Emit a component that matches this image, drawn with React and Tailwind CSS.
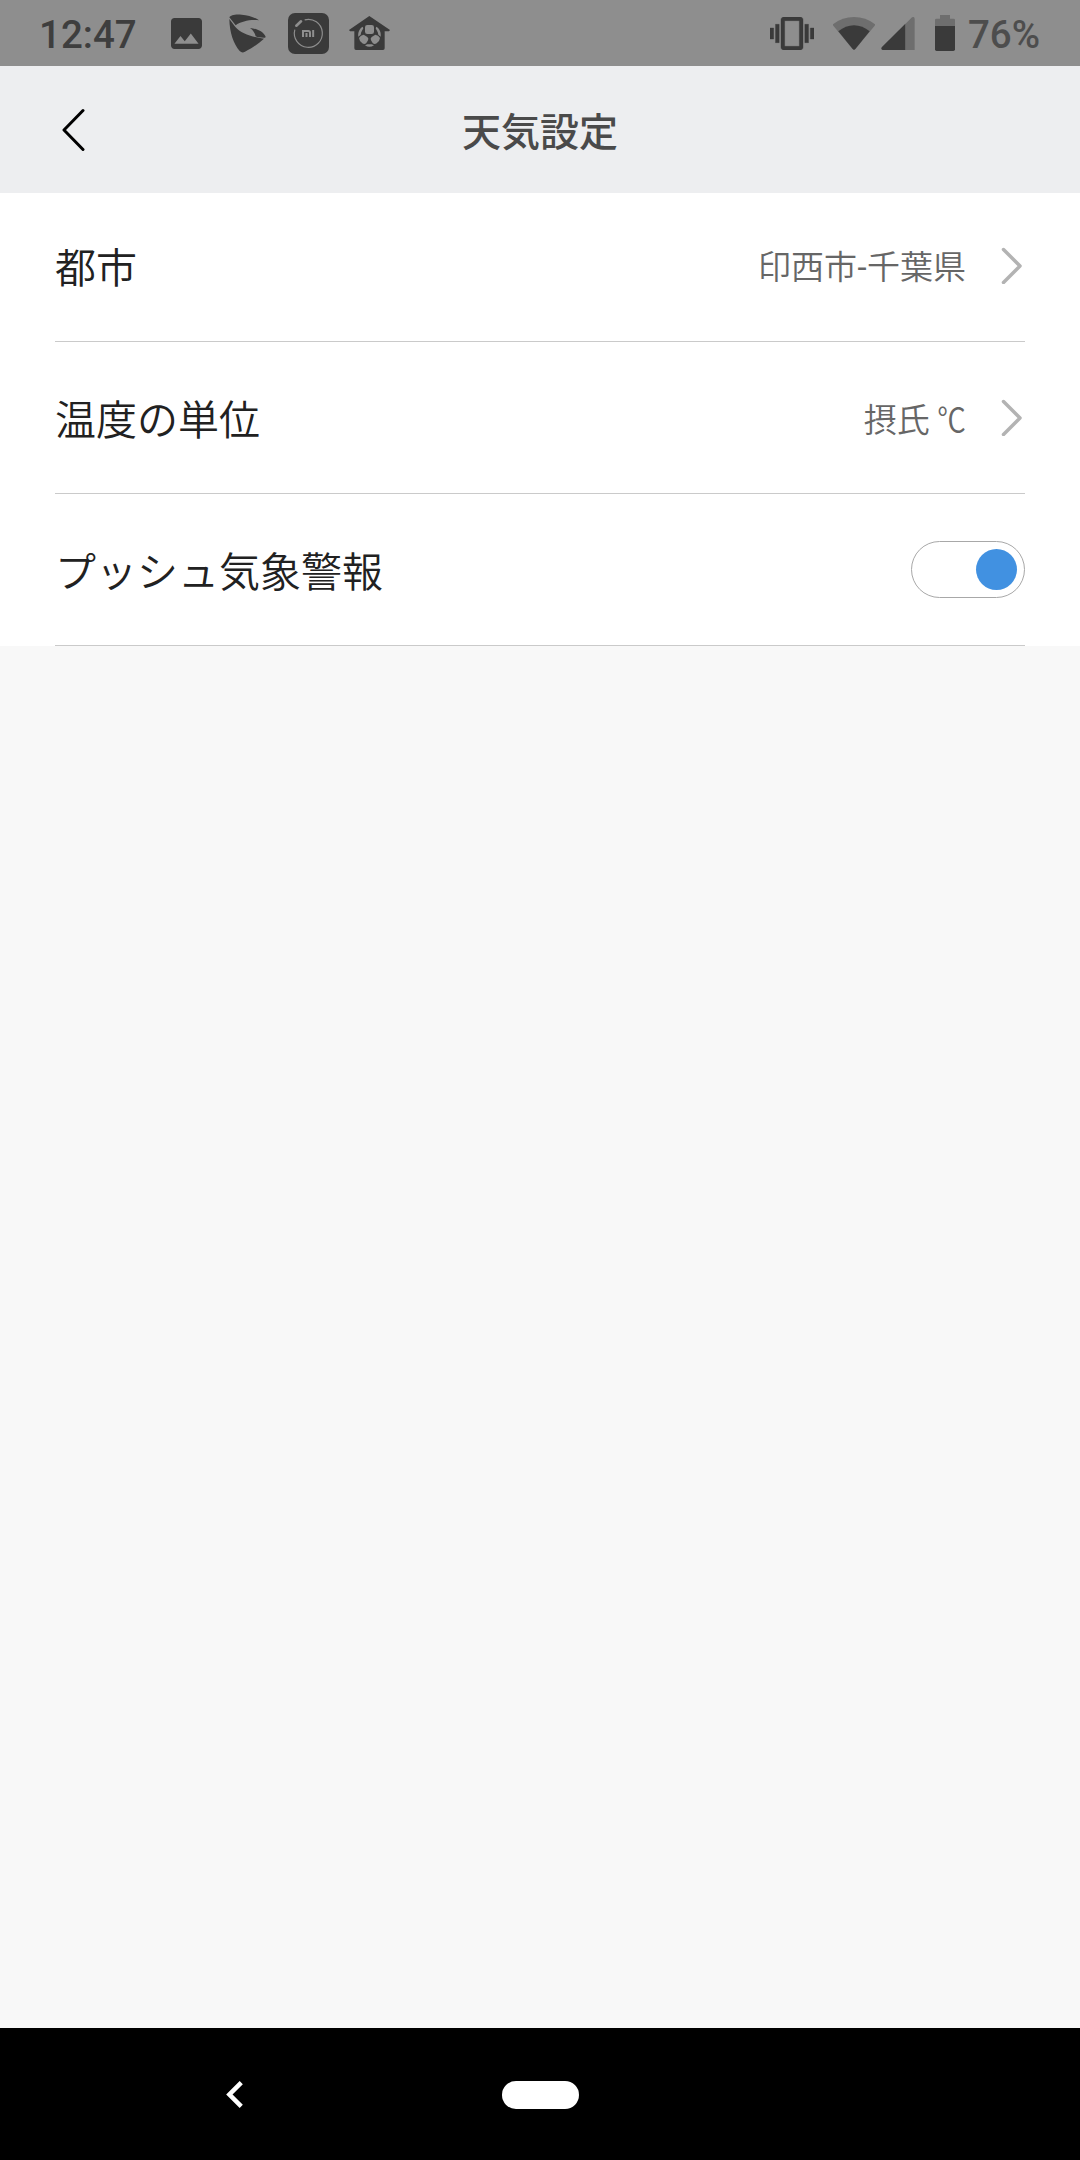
import React, { useState } from 'react';

const ImageIcon = () => (
  <svg width="31" height="31" viewBox="3 3 18 18" fill="#3a3a3a">
    <path d="M21 19V5c0-1.1-.9-2-2-2H5c-1.1 0-2 .9-2 2v14c0 1.1.9 2 2 2h14c1.1 0 2-.9 2-2zM8.5 13.5l2.5 3.01L14.5 12l4.5 6H5l3.5-4.5z" />
  </svg>
);

const SwirlIcon = () => (
  <svg width="37" height="39" viewBox="0 0 111 117" fill="#3a3a3a">
    <path d="M1 10C4 3 20 0 38 2C58 4 78 10 90 19C64 16 36 22 20 34L1 10Z" />
    <path d="M1 15L19 39C36 58 70 70 105 74C92 86 72 101 48 113C42 117 37 116 32 111C14 90 2 58 1 15Z" />
    <path d="M63 42C82 43 102 53 109 66C111 70 109 72 105 71C95 71 86 70 80 67C78 58 73 49 63 42Z" />
  </svg>
);

const MiHomeIcon = () => (
  <svg width="41" height="41" viewBox="0 0 123 123" fill="none">
    <rect width="123" height="123" rx="21" fill="#3a3a3a" />
    <g stroke="#8e8e8e">
      <path d="M50 20.5A42 42 0 1 1 20.5 50" strokeWidth="3.500" />
      <path d="M25 38L39 25" strokeWidth="8" strokeLinecap="round" />
      <path d="M45 72V54H61Q66 54 66 59V72M55.500 60V72M75.500 51V72" strokeWidth="6" />
    </g>
  </svg>
);

const HouseBallIcon = () => (
  <svg width="41" height="34" viewBox="0 0 123 102">
    <path d="M61 0L123 42L120 46H107V97Q107 102 102 102H21Q16 102 16 97V46H3L0 42Z" fill="#3a3a3a" />
    <g fill="#8e8e8e">
      <rect x="48" y="27" width="27" height="27" rx="7" />
      <path d="M41 32C31 38 26 49 28 62L35 56C36 47 41 42 43 37Z" />
      <path d="M82 32C92 38 97 49 95 62L88 56C87 47 82 42 80 37Z" />
      <path d="M44 56L55 63Q60 67 57 73L52 81Q47 86 40 82Q31 76 30 66Q35 57 44 56Z" />
      <path d="M79 56L68 63Q63 67 66 73L71 81Q76 86 83 82Q92 76 93 66Q88 57 79 56Z" />
      <path d="M48 88L55 85H68L75 88Q61 97 48 88Z" />
    </g>
  </svg>
);

const VibrateIcon = () => (
  <svg width="44" height="33" viewBox="0 3 24 18" fill="#3a3a3a">
    <path
      stroke="#3a3a3a"
      strokeWidth=".2"
      d="M0 15h2V9H0v6zm3 2h2V7H3v10zm19-8v6h2V9h-2zm-3 8h2V7h-2v10zM16.500 3h-9C6.670 3 6 3.670 6 4.500v15c0 .83.67 1.500 1.500 1.500h9c.83 0 1.500-.67 1.500-1.500v-15c0-.83-.67-1.500-1.500-1.500zM16 19H8V5h8v14z"
    />
  </svg>
);

const WifiIcon = () => (
  <svg width="42" height="33" viewBox="0 0 126 99">
    <path d="M1 21Q28 0 63 0T125 21Q127 23 125 26L67 96Q63 100 59 96L1 26Q-1 23 1 21Z" fill="#6e6e6e" />
    <path d="M16 43Q38 25 63 25T110 43L67 96Q63 100 59 96Z" fill="#3a3a3a" />
  </svg>
);

const SignalIcon = () => (
  <svg width="34" height="33" viewBox="0 0 102 99">
    <path d="M73 21L93 1Q101 -2 101 5V99H73Z" fill="#6e6e6e" />
    <path d="M73 20V99H5Q-1 97 2 91Z" fill="#3a3a3a" />
  </svg>
);

const BatteryIcon = () => (
  <svg width="20" height="36" viewBox="0 0 60 108">
    <path d="M0 33V15Q0 11 4 11H15V0H45V11H56Q60 11 60 15V33Z" fill="#6e6e6e" />
    <path d="M0 33H60V103Q60 108 55 108H5Q0 108 0 103Z" fill="#3a3a3a" />
  </svg>
);

const StatusBar = () => (
  <div className="flex h-[66px] items-center justify-between bg-[#8e8e8e] pl-[39px] pr-10 font-['Roboto',sans-serif] text-[38.5px] leading-none">
    <div className="flex items-center">
      <span className="w-[132px] pt-[4px] font-medium text-[#3e3e3e]">12:47</span>
      <ImageIcon />
      <div className="ml-[27px]"><SwirlIcon /></div>
      <div className="ml-[22px]"><MiHomeIcon /></div>
      <div className="ml-5"><HouseBallIcon /></div>
    </div>
    <div className="flex items-center">
      <VibrateIcon />
      <div className="ml-[19px]"><WifiIcon /></div>
      <div className="ml-[6px]"><SignalIcon /></div>
      <div className="ml-[20px]"><BatteryIcon /></div>
      <span className="ml-[13px] pt-[4px] font-medium text-[#4d4d4d]">76%</span>
    </div>
  </div>
);

const Header = ({ title }) => (
  <header className="grid h-[127px] grid-cols-[1fr_auto_1fr] items-center bg-[#edeef0] px-[62px]">
    <button type="button" aria-label="戻る">
      <svg width="24" height="44" viewBox="0 0 24 44" fill="none" stroke="#000" strokeWidth="3" strokeLinecap="round" strokeLinejoin="round">
        <path d="M21 2.500L2 22L21 41.500" />
      </svg>
    </button>
    <h1 className="pb-px text-[39px] font-medium leading-none text-[#4a4a4a]">{title}</h1>
  </header>
);

const Chevron = () => (
  <svg className="ml-[35px] mr-[3px]" width="21" height="37" viewBox="0 0 21 37" fill="none" stroke="#b3b3b3" strokeWidth="3.500" strokeLinecap="round" strokeLinejoin="round">
    <path d="M2.500 2.500L19 19L2.500 35.500" />
  </svg>
);

const Row = ({ label, className, children }) => (
  <div className={`flex items-center justify-between border-b border-[#cacaca] ${className}`}>
    <span className="text-[41px] font-[350] leading-none text-[#212121]">{label}</span>
    <div className="flex items-center">{children}</div>
  </div>
);

const Value = ({ children }) => (
  <span className="whitespace-nowrap pt-px text-[33px] font-[350] leading-none text-[#666]">{children}</span>
);

const Toggle = ({ on, onChange }) => (
  <button
    type="button"
    role="switch"
    aria-checked={on}
    onClick={() => onChange(!on)}
    className={`flex h-[57px] w-[114px] items-center rounded-full border border-[#a8a8a8] px-[7px] ${on ? 'justify-end' : 'justify-start'}`}
  >
    <span className={`size-[41px] rounded-full ${on ? 'bg-[#4191e1]' : 'bg-[#b3b3b3]'}`} />
  </button>
);

const NavBar = () => (
  <nav className="flex h-[132px] items-center bg-black pl-[226px]">
    <svg width="17" height="27" viewBox="8 6 7.410 12" fill="#fff">
      <path d="M15.410 7.410L14 6l-6 6 6 6 1.410-1.410L10.830 12z" />
    </svg>
    <div className="ml-[259px] mt-px h-[28px] w-[77px] rounded-full bg-white" />
  </nav>
);

const App = () => {
  const [alerts, setAlerts] = useState(true);

  return (
    <div className="flex h-[2160px] w-[1080px] flex-col bg-[#f8f8f8] font-['Noto_Sans_CJK_JP',sans-serif]">
      <StatusBar />
      <Header title="天気設定" />

      {/* Settings list */}
      <main className="flex-1">
        <div className="bg-white px-[55px]">
          <Row label="都市" className="h-[149px] pb-[3px]">
            <Value>印西市<span className="mx-[0.5px] font-['Roboto',sans-serif] font-normal">-</span>千葉県</Value>
            <Chevron />
          </Row>
          <Row label="温度の単位" className="h-[152px]">
            <Value>摂氏 <span className="-ml-1 inline-block origin-right scale-x-[0.87]">℃</span></Value>
            <Chevron />
          </Row>
          <Row label="プッシュ気象警報" className="h-[152px]">
            <Toggle on={alerts} onChange={setAlerts} />
          </Row>
        </div>
      </main>

      <NavBar />
    </div>
  );
};

export default App;
